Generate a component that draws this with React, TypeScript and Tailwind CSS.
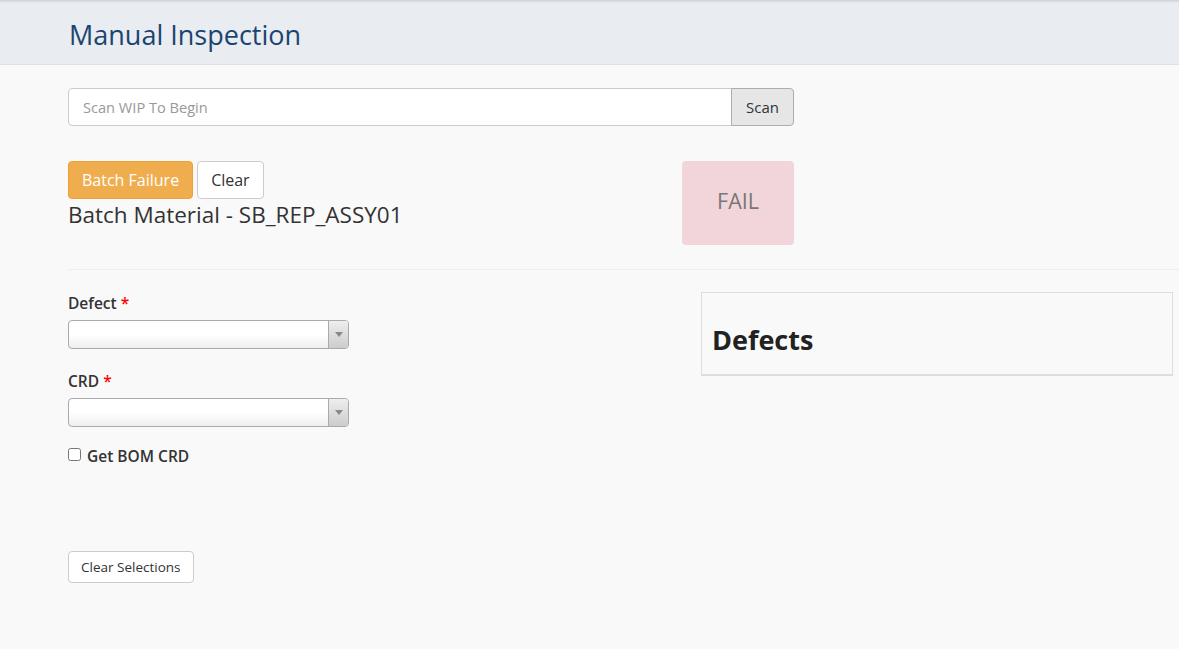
const font = { fontFamily: '"Open Sans", "Liberation Sans", sans-serif' };

function Select() {
    return (
        <div className="flex h-[29px] w-[281px] rounded-[4px] border border-[#aaa] bg-gradient-to-b from-white via-white to-[#eee] overflow-hidden">
            <div className="flex-1" />
            <div className="w-[20px] border-l border-[#aaa] bg-gradient-to-b from-[#eee] to-[#ccc] flex items-center justify-center">
                <span className="block w-0 h-0 border-l-[4px] border-r-[4px] border-t-[5px] border-l-transparent border-r-transparent border-t-[#888]" />
            </div>
        </div>
    );
}

export default function App() {
    return (
        <div className="min-h-[649px] bg-[#f9f9f9] text-[#333]" style={font}>
            {/* Header */}
            <div className="h-[65px] bg-[#e9ecf0] border-b border-[#dde1e6] shadow-[inset_0_3px_3px_-2px_rgba(0,0,0,0.15)] flex items-center pl-[69px] pt-[5px]">
                <h1 className="text-[27px] leading-none text-[#1b4571]">Manual Inspection</h1>
            </div>

            <div className="pl-[68px]">
                {/* Scan bar */}
                <div className="mt-[23px] flex w-[726px] h-[38px]">
                    <input
                        placeholder="Scan WIP To Begin"
                        className="flex-1 h-full rounded-l-[4px] border border-[#ccc] bg-white px-[14px] text-[14.6px] text-[#555] placeholder:text-[#999] outline-none"
                    />
                    <button className="w-[63px] h-full -ml-px rounded-r-[4px] border border-[#adadad] bg-[#e6e6e6] text-[15px] text-[#333]">
                        Scan
                    </button>
                </div>

                {/* Batch row */}
                <div className="mt-[35px] flex w-[726px] justify-between">
                    <div>
                        <div className="flex gap-[4px]">
                            <button className="h-[38px] px-[13px] rounded-[4px] border border-[#eea236] bg-[#f0ad4e] text-white text-[16px]">
                                Batch Failure
                            </button>
                            <button className="h-[38px] px-[13px] rounded-[4px] border border-[#ccc] bg-white text-[#333] text-[16px]">
                                Clear
                            </button>
                        </div>
                        <div className="text-[22.5px] leading-[32px] text-[#333]">Batch Material - SB_REP_ASSY01</div>
                    </div>
                    <div className="w-[112px] h-[84px] rounded-[4px] bg-[#f2d5da] flex items-center justify-center pb-[3px] text-[21.5px] text-[#777]">
                        FAIL
                    </div>
                </div>
            </div>

            <div className="ml-[68px] mt-[24px] border-t border-[#eee]" />

            <div className="pl-[68px] flex">
                {/* Left column */}
                <div className="w-[633px] pt-[23px]">
                    <label className="block text-[15.5px] font-semibold leading-[20px] text-[#333]">
                        Defect <span className="text-[#ff0000]">*</span>
                    </label>
                    <div className="mt-[7px]">
                        <Select />
                    </div>
                    <label className="block mt-[22px] text-[15.5px] font-semibold leading-[20px] text-[#333]">
                        CRD <span className="text-[#ff0000]">*</span>
                    </label>
                    <div className="mt-[7px]">
                        <Select />
                    </div>
                    <label className="mt-[19px] flex items-center gap-[6px] text-[15.5px] font-semibold leading-[20px] text-[#333]">
                        <input type="checkbox" className="w-[13px] h-[13px] m-0 -mt-[3px]" />
                        Get BOM CRD
                    </label>
                    <button className="mt-[85px] h-[32px] px-[12px] rounded-[4px] border border-[#ccc] bg-white text-[13.5px] text-[#333]">
                        Clear Selections
                    </button>
                </div>

                {/* Right column */}
                <div className="pt-[22px]">
                    <div className="w-[472px] h-[84px] border border-[#ddd] border-b-2 bg-[#f9f9f9] px-[10px] pt-[27px]">
                        <h2 className="text-[27px] font-bold leading-[40px] text-[#222]">Defects</h2>
                    </div>
                </div>
            </div>
        </div>
    );
}
